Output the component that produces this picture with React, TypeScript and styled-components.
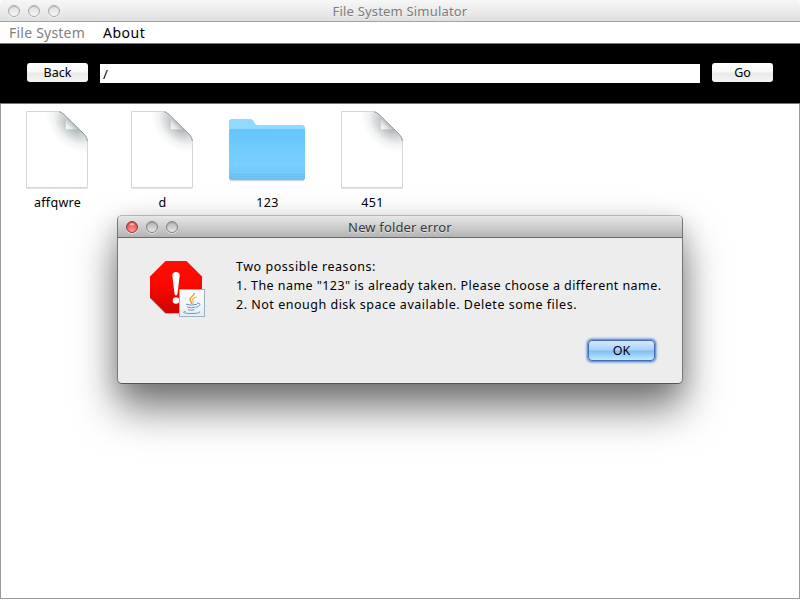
import React from "react";
import styled, { createGlobalStyle } from "styled-components";

const GlobalStyle = createGlobalStyle`
  * { box-sizing: border-box; }
  body {
    margin: 0;
    overflow: hidden;
    background: #fff;
    color: #000;
    font-family: "Noto Sans", "Open Sans", sans-serif;
  }
`;

const Window = styled.main`
  position: relative;
  width: 800px;
  height: 600px;
  display: flex;
  flex-direction: column;
  background: #fff;
  overflow: hidden;
`;

const TitleBar = styled.header`
  display: grid;
  grid-template-columns: 80px 1fr 80px;
  align-items: center;
  height: 22px;
  flex: none;
  background: linear-gradient(#f7f7f7, #e0e0e0);
  border-bottom: 1px solid #a3a3a3;
  border-radius: 4px 4px 0 0;
`;

const Lights = styled.div`
  display: flex;
  gap: 8px;
  padding: 1px 0 0 8px;
`;

const Light = styled.span<{ $tone: "idle" | "gray" | "red" }>`
  width: 12px;
  height: 12px;
  border-radius: 50%;
  border: 1px solid ${(p) => (p.$tone === "red" ? "#9a4040" : p.$tone === "gray" ? "#858585" : "#a9a9a9")};
  background: ${(p) =>
    p.$tone === "red"
      ? "radial-gradient(ellipse 4px 2px at 50% 22%, #fbd0d0, transparent), radial-gradient(circle at 50% 90%, #ff9d94, #e84a4c 80%)"
      : p.$tone === "gray"
        ? "linear-gradient(#b5b5b5, #e6e6e6)"
        : "linear-gradient(#dedede, #f6f6f6)"};
  box-shadow: 0 1px 0 rgba(255, 255, 255, 0.6),
    inset 0 1px 1px ${(p) => (p.$tone === "red" ? "rgba(120,0,0,.3)" : "rgba(0,0,0,.16)")};
`;

const Title = styled.h1<{ $dark?: boolean }>`
  margin: 0;
  text-align: center;
  white-space: nowrap;
  font-size: 13px;
  font-weight: 400;
  line-height: 20px;
  letter-spacing: ${(p) => (p.$dark ? "0.15px" : "0.18px")};
  color: ${(p) => (p.$dark ? "#383838" : "#7d7d7d")};
  text-shadow: 0 1px 0 rgba(255, 255, 255, 0.5);
  padding-top: 1px;
`;

const MenuBar = styled.nav`
  display: flex;
  flex: none;
  gap: 18px;
  height: 22px;
  padding-left: 9px;
  border-bottom: 1px solid #787878;
  font-size: 14px;
  line-height: 21px;
`;

const MenuItem = styled.span<{ $muted?: boolean; $width: number }>`
  width: ${(p) => p.$width}px;
  white-space: nowrap;
  color: ${(p) => (p.$muted ? "#808080" : "#000")};
  letter-spacing: ${(p) => (p.$muted ? "0.22px" : "0.5px")};
`;

const Toolbar = styled.section`
  display: flex;
  flex: none;
  align-items: flex-start;
  gap: 12px;
  height: 60px;
  padding: 19px 27px 0;
  background: #000;
  border-bottom: 1px solid #777;
`;

const Button = styled.button`
  width: 61px;
  height: 19px;
  padding: 0;
  border: 0;
  border-radius: 3px;
  background: linear-gradient(#fff 0%, #f8f8f8 48%, #e9e9e9 52%, #f4f4f4 100%);
  color: #000;
  font: 12.5px/18px "Noto Sans", sans-serif;
`;

const PathField = styled.div`
  width: 600px;
  height: 19px;
  margin-top: 1px;
  padding-left: 3px;
  background: #fff;
  font-size: 13px;
  line-height: 20px;
`;

const Files = styled.section`
  display: flex;
  flex: 1;
  align-items: flex-start;
  margin-bottom: 1px;
  padding: 6px 0 0 4px;
  border: solid #999;
  border-width: 0 1px 1px;
`;

const FileItem = styled.div`
  display: flex;
  flex-direction: column;
  align-items: center;
  width: 105px;
  font-size: 12.5px;
  line-height: 16px;
  letter-spacing: 0.3px;
`;

const IconBox = styled.svg`
  display: block;
  width: 80px;
  height: 80px;
  margin: 0 2px 5px 0;
`;

const Dialog = styled.section`
  position: absolute;
  left: 117px;
  top: 215px;
  width: 566px;
  height: 169px;
  border: 1px solid #777;
  border-top-color: #b5b5b5;
  border-bottom-color: #555;
  border-radius: 5px;
  background: #ededed;
  box-shadow: 0 25px 42px rgba(0, 0, 0, 0.5), 0 7px 24px rgba(0, 0, 0, 0.16);
`;

const DialogBar = styled(TitleBar)`
  background: linear-gradient(#e8e8e8, #b4b4b4);
  border-bottom-color: #696969;
`;

const DialogBody = styled.div`
  display: grid;
  grid-template-columns: 58px 1fr;
  column-gap: 29px;
  padding: 19px 20px 0 31px;
`;

const Message = styled.div`
  font-size: 12.5px;
  line-height: 19px;
  white-space: nowrap;
`;

const Line = styled.p<{ $spacing: number }>`
  margin: 0;
  letter-spacing: ${(p) => p.$spacing}px;
`;

const Actions = styled.div`
  display: flex;
  justify-content: flex-end;
  padding: 20px 27px 0 0;
`;

const DefaultButton = styled(Button)`
  width: 67px;
  height: 21px;
  border: 1px solid #4468b4;
  border-radius: 4px;
  background: linear-gradient(#d6e9fc 0%, #a9d1fa 48%, #80bdf8 52%, #bdebff 100%);
  box-shadow: 0 0 0 1px #6c9cd8, 0 0 2px 2px #8fb5e0;
  line-height: 19px;
`;

function DocumentIcon() {
  return (
    <IconBox viewBox="0 0 80 80">
      <defs>
        <radialGradient id="pageShade" gradientUnits="userSpaceOnUse" cx="0" cy="0" r="1" gradientTransform="translate(58 14) rotate(43) scale(34 24)">
          <stop offset="0" stopColor="#8f9a9e" />
          <stop offset=".35" stopColor="#c6cbcd" />
          <stop offset=".7" stopColor="#f1f2f2" />
          <stop offset="1" stopColor="#fff" />
        </radialGradient>
        <linearGradient id="pageCurl" gradientUnits="userSpaceOnUse" x1="48" y1="20" x2="58" y2="10">
          <stop stopColor="#fff" />
          <stop offset=".4" stopColor="#e6e9ea" />
          <stop offset="1" stopColor="#8d9598" />
        </linearGradient>
      </defs>
      <path d="M9.5 78.3h61" stroke="#ddd" />
      <path d="M9.5 1.5h32q2 0 5 2.500l20.500 20q3.500 3.500 3.500 9v44.500h-61z" fill="url(#pageShade)" stroke="#d5d6d7" />
      <path d="M42 1.700q2 .3 5 2.800l20 19.500q3 3 3.500 7" fill="none" stroke="#959da0" />
      <path d="M47.500 5.500q1 5 .5 14.500 7-.7 14-.5z" fill="url(#pageCurl)" />
      <path d="M48.300 9v10.800h11" fill="none" stroke="#b9c3c7" strokeWidth=".7" />
    </IconBox>
  );
}

function FolderIcon() {
  return (
    <IconBox viewBox="0 0 80 80">
      <defs>
        <linearGradient id="folderFront" x1="0" y1="0" x2="0" y2="1">
          <stop stopColor="#66c5fb" />
          <stop offset=".7" stopColor="#79d0ff" />
          <stop offset="1" stopColor="#6cc3f7" />
        </linearGradient>
      </defs>
      <path d="M3 70.700h74" stroke="#c3d0d8" strokeWidth="1" />
      <path d="M2 68V12q0-3 3-3h18q3 0 4 3 1 3 4 3h44q3 0 3 3v50z" fill="#91d9ff" />
      <path d="M2 21q0-2 2-2h72q2 0 2 2v47q0 2-2 2H4q-2 0-2-2z" fill="url(#folderFront)" />
      <path d="M2 64.500h76M2 66.500h76M2 68.500h76" stroke="#59b2e7" strokeWidth=".4" />
    </IconBox>
  );
}

const AlertArt = styled.svg`
  display: block;
  width: 58px;
  height: 60px;
  margin-top: 3px;
`;

function AlertIcon() {
  return (
    <AlertArt viewBox="0 0 58 60">
      <defs>
        <linearGradient id="alertRed" x1="0" y1="0" x2="0" y2="1">
          <stop stopColor="#fb1005" />
          <stop offset=".45" stopColor="#fa0800" />
          <stop offset="1" stopColor="#cf0500" />
        </linearGradient>
        <linearGradient id="badgePaper" x1="0" y1="0" x2="0" y2="1">
          <stop stopColor="#fff" />
          <stop offset="1" stopColor="#e5edf3" />
        </linearGradient>
      </defs>
      <path d="M16.500 2h21L53 17.500v21L37.500 54h-21L1 38.500v-21z" fill="#000" opacity=".25" />
      <path d="M16.500 1h21L53 16.500v21L37.500 53h-21L1 37.500v-21z" fill="url(#alertRed)" />
      <path d="M23.300 15.500q0-3.500 3.700-3.500t3.700 3.500l-2.200 18q-.3 2-1.500 2t-1.500-2z" fill="#fff" />
      <circle cx="27" cy="40.500" r="3.300" fill="#fff" />
      <rect x="30.500" y="29.500" width="25" height="27" fill="url(#badgePaper)" stroke="#9bb0c0" />
      <path d="M45.500 33c-.3 3-4.800 3.600-4.500 6.500.2 1.800 2 2.300 1.500 4.500" fill="none" stroke="#eb9a1c" strokeWidth="1.300" />
      <path d="M47.500 37c-3.500 1-4.500 2.300-3.500 3.800.8 1.200.5 2-.5 3" fill="none" stroke="#f3b52e" strokeWidth="1.100" />
      <path d="M37 44.300q5 1.600 11 0M38 47q4.500 1.600 8.500 0M39 49.700q3.500 1.200 6.500 0M48 43.500c3-.7 3.400.5 2.400 2-.7 1-2 1.500-3.400 1.800M36.500 51.300c-4 .8-1.500 2.200 5.500 2.200s10-1 8.500-2" fill="none" stroke="#7392b2" strokeWidth="1" />
    </AlertArt>
  );
}

const files = [
  { name: "affqwre", folder: false },
  { name: "d", folder: false },
  { name: "123", folder: true },
  { name: "451", folder: false },
];

export default function App() {
  return (
    <>
      <GlobalStyle />
      <Window>
        <TitleBar>
          <Lights>
            <Light $tone="idle" />
            <Light $tone="idle" />
            <Light $tone="idle" />
          </Lights>
          <Title>File System Simulator</Title>
        </TitleBar>
        <MenuBar>
          <MenuItem $muted $width={76}>File System</MenuItem>
          <MenuItem $width={50}>About</MenuItem>
        </MenuBar>
        <Toolbar>
          <Button>Back</Button>
          <PathField>/</PathField>
          <Button>Go</Button>
        </Toolbar>
        <Files>
          {files.map((f) => (
            <FileItem key={f.name}>
              {f.folder ? <FolderIcon /> : <DocumentIcon />}
              {f.name}
            </FileItem>
          ))}
        </Files>
        <Dialog role="alertdialog">
          <DialogBar>
            <Lights>
              <Light $tone="red" />
              <Light $tone="gray" />
              <Light $tone="gray" />
            </Lights>
            <Title $dark>New folder error</Title>
          </DialogBar>
          <DialogBody>
            <AlertIcon />
            <Message>
              <Line $spacing={0.54}>Two possible reasons:</Line>
              <Line $spacing={0.435}>1. The name "123" is already taken. Please choose a different name.</Line>
              <Line $spacing={0.51}>2. Not enough disk space available. Delete some files.</Line>
            </Message>
          </DialogBody>
          <Actions>
            <DefaultButton>OK</DefaultButton>
          </Actions>
        </Dialog>
      </Window>
    </>
  );
}
